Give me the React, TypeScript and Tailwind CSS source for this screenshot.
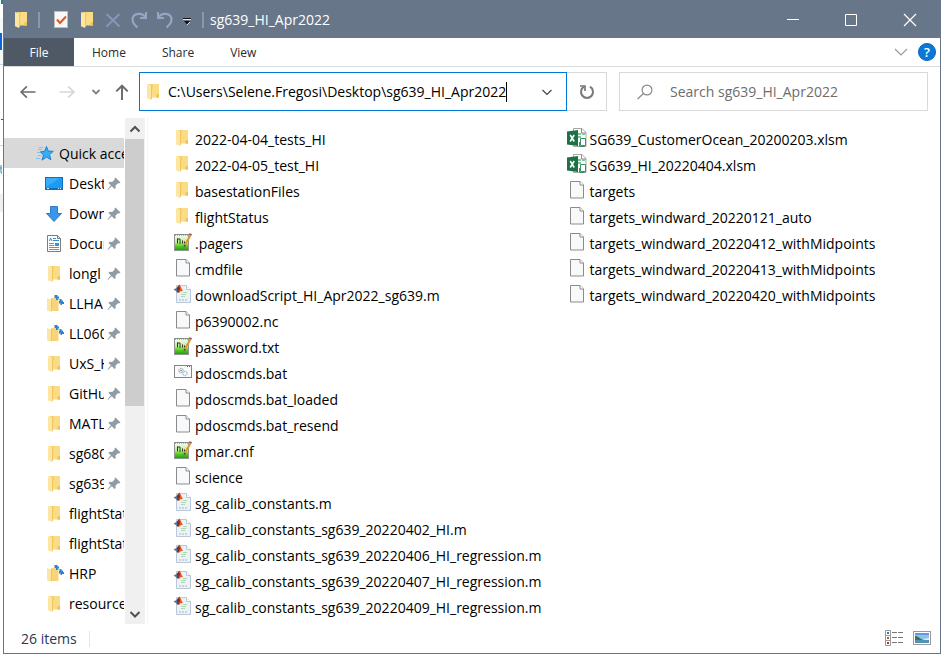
import type { ReactNode } from "react";

const FONT = "font-['Open_Sans','Noto_Sans',sans-serif]";

type IconProps = { children: ReactNode; size?: number };

function Icon({ children, size = 20 }: IconProps) {
  return (
    <svg width={size} height={size} viewBox={`0 0 ${size} ${size}`} className="shrink-0" aria-hidden="true">
      {children}
    </svg>
  );
}

function FolderIcon() {
  return (
    <Icon>
      <path d="M5 2h9.5v13H5z" fill="#f6cf6b" />
      <path d="M9 2h6v13.5H7z" fill="#fadb86" />
      <path d="M12.5 12.5l2.5-.8v4h-2.5z" fill="#efc25a" />
      <path d="M3 2l4 1.2V18l-4-1.8z" fill="#fde6a2" />
      <path d="M7 4.500V17.500l1-.8V4z" fill="#f0c562" />
    </Icon>
  );
}

function SyncFolderIcon() {
  return (
    <Icon>
      <path d="M2 4l4 1.2V18l-4-1.4z" fill="#fde6a2" />
      <path d="M6 4h7.5v13H6z" fill="#f8d37a" />
      <path d="M6 5.5V17.500l1-.8V5z" fill="#f0c562" />
      <path d="M9.500 1h3v1.500H14v2h-1v1.500h-2V4H9.500z" fill="#2c83cf" />
      <path d="M14.500 5h2v1.500H18v1.500h1v2h-2v1h-1.500V9.500h-1.500V7h.5z" fill="#2c83cf" />
      <path d="M12.500 4.500h2v1h-2z" fill="#8cbde6" />
    </Icon>
  );
}

function PageIcon() {
  return (
    <Icon>
      <path d="M3.500 1.500h9.500l3.500 3.500v13h-13z" fill="#f8f9fa" stroke="#8b8b8b" />
      <path d="M13 1.500v3.500h3.500" fill="#fff" stroke="#8b8b8b" />
    </Icon>
  );
}

function NotepadIcon() {
  return (
    <Icon>
      <defs>
        <linearGradient id="notepad-page" x1="0" y1="0" x2="0" y2="1">
          <stop offset="0.1" stopColor="#f3f8ef" />
          <stop offset="0.5" stopColor="#b8ea8c" />
          <stop offset="0.75" stopColor="#4fc81e" />
          <stop offset="1" stopColor="#1f9a14" />
        </linearGradient>
      </defs>
      <rect x="1.500" y="2.500" width="14" height="16" fill="url(#notepad-page)" stroke="#8f958f" />
      <path d="M2 3h13" stroke="#777" strokeDasharray="1 1" />
      <path d="M4.500 6.500v5M7 7v5M4.500 7H7M9.500 8.500v3M11.500 9.500v2" stroke="#2b3a24" fill="none" />
      <path d="M17.300 3.500L12 13" stroke="#e09a2c" strokeWidth="2" />
      <path d="M16.800 1l2.200 1.300-.9 1.700-2.200-1.300z" fill="#a4574a" />
      <path d="M11 12.500l2 1.200-2.300 1.800z" fill="#5b4a2a" />
    </Icon>
  );
}

function MatlabIcon() {
  return (
    <Icon>
      <path d="M3.500 1.500h10l4 4v13h-14z" fill="#edf2f9" stroke="#b8c7da" />
      <path d="M13.500 1.500v4h4" fill="#fff" stroke="#b8c7da" />
      <path d="M10 8.500h4M8 10.500h5M8 12.500h4" stroke="#a9d9ae" />
      <path d="M6 15.500h9M6 16.500h8" stroke="#ced3da" strokeDasharray="2 1" />
      <path d="M.5 5.500l3-1.500L6 6 3.500 7.500z" fill="#3a83bd" />
      <path d="M3.500 4L6.500.5 7.500 6 5 9 3.500 7.500 4.500 6z" fill="#8c2b18" />
      <path d="M6.500.5c1.200 1.500 2 4 3.500 6.500-1.200-.3-2.200 0-3.500 1.500L5 9l2-4z" fill="#dd5f2a" />
    </Icon>
  );
}

function BatchIcon() {
  return (
    <Icon>
      <rect x="1.500" y="3.500" width="17" height="12" fill="#fbfbfb" stroke="#858585" />
      <path d="M14 4.500h1M16 4.500h1" stroke="#555" />
      <circle cx="8" cy="8.500" r="2.200" fill="#f4f4f4" stroke="#8a9197" strokeDasharray="1.500 .6" />
      <circle cx="8" cy="8.500" r=".7" fill="#666" />
      <circle cx="12" cy="11.500" r="2.200" fill="#eaf5fc" stroke="#76a9c9" strokeDasharray="1.500 .6" />
    </Icon>
  );
}

function ExcelIcon() {
  return (
    <Icon>
      <path d="M6.500.5h8.500l4 4v14h-12.500z" fill="#fff" stroke="#a6a9a6" />
      <path d="M14.500.5v4.500h4.500" fill="none" stroke="#8c8c8c" />
      <path d="M11 6h3M15 6h3M11 9h3" stroke="#86c3a0" strokeWidth="2" />
      <path d="M13.500 10.500h5v7h-5z" fill="#fff" stroke="#3a9262" />
      <path d="M12.500 14v4.500h5" fill="none" stroke="#3a9262" />
      <path d="M0 3.500l11-1.500v16L0 16.500z" fill="#1e7145" />
      <path d="M3.200 7l4 6.500M7.200 7l-4 6.500" stroke="#fff" strokeWidth="1.600" />
    </Icon>
  );
}

function StarIcon() {
  return (
    <Icon>
      <path d="M10.500 2.500l1.800 4.600 5 .2-3.800 3.300 1.400 5.100-4.300-2.600-4.600 3 1.500-5.200-3.200-3 4.300-.6z" fill="#3aabf5" stroke="#1f82cb" />
      <path d="M2 5.500h4M3 3.500h4M1 8.500h3M2 11.500h3M0 14.500h4" stroke="#7fc4f0" />
    </Icon>
  );
}

function DesktopIcon() {
  return (
    <Icon>
      <rect x=".5" y="3.500" width="17" height="12" fill="#1a9bf5" stroke="#0f6fbd" />
      <path d="M1 13V4h14z" fill="#38aefa" />
      <path d="M1 14.500h16" stroke="#0f6fbd" />
      <path d="M2 14.500h2M13 14.500h1M15 14.500h1" stroke="#d8efff" />
    </Icon>
  );
}

function DownloadIcon() {
  return (
    <Icon>
      <path d="M5.500 2.500h7v7h4L9 17.500 1.500 9.500h4z" fill="#3a96e8" stroke="#2c7cc8" />
    </Icon>
  );
}

function DocumentsIcon() {
  return (
    <Icon>
      <path d="M2.500 1.500h10l3 3v13h-13z" fill="#fff" stroke="#7d7d7d" />
      <path d="M12.500 1.500v3h3" fill="none" stroke="#7d7d7d" />
      <path d="M4.500 7l1-3L7 7M8 4.500h3M8 6.500h6" stroke="#2d8fd5" fill="none" />
      <path d="M4 9.500h5M4 11.500h5M4 13.500h10M4 15.500h10" stroke="#8b8b8b" />
      <rect x="10" y="9" width="4" height="3" fill="#3a93cf" />
    </Icon>
  );
}

function PinIcon() {
  return (
    <Icon size={14}>
      <path d="M8.500.5l5 5-1.500 1-1-.3-2.500 2.300.2 2.500-1.200 1-2.700-2.700L.8 13l-.3-.5 3.400-4.200L1.500 6l1-1.200 2.700.2L7.700 2.500 7.500 1.500z" fill="#8f9ba5" />
    </Icon>
  );
}

function Stroke({ size = 14, d = "M2.500 5l4.500 4.500L11.500 5", width = 1.2 }: { size?: number; d?: string; width?: number }) {
  return (
    <svg width={size} height={size} viewBox="0 0 14 14" fill="none" stroke="currentColor" strokeWidth={width} aria-hidden="true">
      <path d={d} />
    </svg>
  );
}

type Place = { name: string; icon: () => ReactNode; pinned?: boolean };

const places: Place[] = [
  { name: "Desktop", icon: DesktopIcon, pinned: true },
  { name: "Downloads", icon: DownloadIcon, pinned: true },
  { name: "Documents", icon: DocumentsIcon, pinned: true },
  { name: "longl", icon: FolderIcon, pinned: true },
  { name: "LLHA", icon: SyncFolderIcon, pinned: true },
  { name: "LL060", icon: SyncFolderIcon, pinned: true },
  { name: "UxS_H", icon: FolderIcon, pinned: true },
  { name: "GitHub", icon: FolderIcon, pinned: true },
  { name: "MATLAB", icon: FolderIcon, pinned: true },
  { name: "sg680", icon: FolderIcon, pinned: true },
  { name: "sg639", icon: FolderIcon, pinned: true },
  { name: "flightStatus", icon: FolderIcon },
  { name: "flightStatus", icon: FolderIcon },
  { name: "HRP", icon: SyncFolderIcon },
  { name: "resources", icon: FolderIcon },
];

const files: [string, () => ReactNode][] = [
  ["2022-04-04_tests_HI", FolderIcon],
  ["2022-04-05_test_HI", FolderIcon],
  ["basestationFiles", FolderIcon],
  ["flightStatus", FolderIcon],
  [".pagers", NotepadIcon],
  ["cmdfile", PageIcon],
  ["downloadScript_HI_Apr2022_sg639.m", MatlabIcon],
  ["p6390002.nc", PageIcon],
  ["password.txt", NotepadIcon],
  ["pdoscmds.bat", BatchIcon],
  ["pdoscmds.bat_loaded", PageIcon],
  ["pdoscmds.bat_resend", PageIcon],
  ["pmar.cnf", NotepadIcon],
  ["science", PageIcon],
  ["sg_calib_constants.m", MatlabIcon],
  ["sg_calib_constants_sg639_20220402_HI.m", MatlabIcon],
  ["sg_calib_constants_sg639_20220406_HI_regression.m", MatlabIcon],
  ["sg_calib_constants_sg639_20220407_HI_regression.m", MatlabIcon],
  ["sg_calib_constants_sg639_20220409_HI_regression.m", MatlabIcon],
  ["SG639_CustomerOcean_20200203.xlsm", ExcelIcon],
  ["SG639_HI_20220404.xlsm", ExcelIcon],
  ["targets", PageIcon],
  ["targets_windward_20220121_auto", PageIcon],
  ["targets_windward_20220412_withMidpoints", PageIcon],
  ["targets_windward_20220413_withMidpoints", PageIcon],
  ["targets_windward_20220420_withMidpoints", PageIcon],
];

function TitleBar() {
  return (
    <header className="flex h-[38px] shrink-0 items-center bg-[#687689] pt-px text-white">
      <div className="flex items-center pl-2">
        <FolderIcon />
        <span className="mr-3 ml-1.5 h-4 w-[2px] bg-[#8d97a5]" />
        <button aria-label="Properties" className="mr-1.5 flex">
          <Icon>
            <rect x="2.500" y="1.500" width="13" height="16" fill="#f8f8f8" stroke="#bdbdbd" />
            <path d="M5 9.500l3 3.500L14 6.500" fill="none" stroke="#e2571a" strokeWidth="2" />
          </Icon>
        </button>
        <button aria-label="New folder" className="mr-1.5 flex">
          <FolderIcon />
        </button>
        <button aria-label="Delete" className="mr-1.5 flex">
          <Icon>
            <path d="M2.500 4l13 12.500M15.500 4l-13 12.500" stroke="#8497b8" strokeWidth="2" />
          </Icon>
        </button>
        <button aria-label="Redo" className="mr-1.5 flex">
          <Icon>
            <path d="M16 2v6h-6" fill="none" stroke="#94a6c3" strokeWidth="2" />
            <path d="M16 8C13 2 3 2.500 2.500 9.500c0 3 1.500 5 5 8" fill="none" stroke="#94a6c3" strokeWidth="2.200" />
          </Icon>
        </button>
        <button aria-label="Undo" className="mr-1 flex">
          <Icon>
            <path d="M2 2v6h6" fill="none" stroke="#94a6c3" strokeWidth="2" />
            <path d="M2 8C5 2 15.500 2.500 15.500 9.500c0 3-1.500 5-5 8" fill="none" stroke="#94a6c3" strokeWidth="2.200" />
          </Icon>
        </button>
        <button aria-label="Customize Quick Access Toolbar" className="flex">
          <Icon size={14}>
            <path d="M3 5.500h8" stroke="#111" />
            <path d="M3 6.500h8" stroke="#e6e6e6" />
            <path d="M4 8h6l-3 3.500z" fill="#111" />
            <path d="M10 9l-3 3" stroke="#e6e6e6" />
          </Icon>
        </button>
        <span className="mr-1.5 ml-2 h-4 w-[2px] bg-[#8d97a5]" />
      </div>
      <h1 className="flex-1 text-sm">sg639_HI_Apr2022</h1>
      <div className="flex text-white">
        <button aria-label="Minimize" className="flex w-[58px] justify-center">
          <Stroke d="M1 6.500h12" width={1} />
        </button>
        <button aria-label="Maximize" className="flex w-[58px] justify-center">
          <Stroke d="M1.500 1.500h11v11h-11z" width={1} />
        </button>
        <button aria-label="Close" className="flex w-[60px] justify-center">
          <Stroke d="M1 1l12 12M13 1L1 13" />
        </button>
      </div>
    </header>
  );
}

function Ribbon() {
  return (
    <nav aria-label="Ribbon" className="flex h-[29px] shrink-0 border-b border-[#dadbdc] text-xs text-[#2b2b2b]">
      <button className="w-[70px] bg-[#4f5966] pt-px text-white">File</button>
      <button className="px-[18px] pt-px">Home</button>
      <button className="px-[18px] pt-px">Share</button>
      <button className="px-[18px] pt-px">View</button>
      <button aria-label="Expand the Ribbon" className="ml-auto px-2.5 text-[#9a9a9a]">
        <Stroke d="M1 4l6 6 6-6" />
      </button>
      <button aria-label="Help" className="mr-1">
        <Icon size={18}>
          <circle cx="9" cy="9" r="8.500" fill="#0a78d6" stroke="#0c63b3" />
          <text x="9" y="14" textAnchor="middle" fill="#fff" fontSize="13" fontWeight="600">?</text>
        </Icon>
      </button>
    </nav>
  );
}

function AddressRow() {
  return (
    <div className="flex h-[51px] shrink-0 items-center pr-3 pb-[2px] pl-1">
      <button aria-label="Back" className="flex w-[39px] justify-center text-[#6b6b6b]">
        <Stroke size={16} d="M13.500 7H1M6 2L1 7l5 5" width={1.5} />
      </button>
      <button aria-label="Forward" className="flex w-[39px] justify-center text-[#d6d6d6]">
        <Stroke size={16} d="M.5 7H13M8 2l5 5-5 5" width={1.5} />
      </button>
      <button aria-label="Recent locations" className="flex w-5 justify-center text-[#808080]">
        <Stroke d="M3.500 5L7 8.500 10.500 5" width={1.8} />
      </button>
      <button aria-label="Up" className="mr-[2px] flex w-[31px] justify-center text-[#6b6b6b]">
        <Stroke size={16} d="M7 14V1.500M2 6.500l5-5 5 5" width={1.7} />
      </button>
      <div className="flex h-[39px] flex-[422] items-center border border-[#0078d7] pl-1">
        <FolderIcon />
        <input
          aria-label="Address"
          readOnly
          value="C:\Users\Selene.Fregosi\Desktop\sg639_HI_Apr2022"
          className="ml-1 field-sizing-content min-w-0 text-sm text-black outline-none"
        />
        <span className="h-5 w-px shrink-0 bg-black" />
        <button aria-label="Previous locations" className="mr-3 ml-auto flex text-[#444]">
          <Stroke />
        </button>
      </div>
      <button aria-label="Refresh" className="mr-3 flex h-[39px] w-10 shrink-0 items-center justify-center border border-l-0 border-[#d9d9d9] text-[#7a7a7a]">
        <svg width="16" height="16" viewBox="0 0 16 16" fill="none" stroke="currentColor" strokeWidth="2" aria-hidden="true">
          <path d="M11 2.700a6 6 0 1 1-6 0" />
          <path d="M1 2h5v5" strokeWidth="1.700" />
        </svg>
      </button>
      <label className="flex h-[39px] flex-[291] items-center border border-[#d9d9d9] pl-4">
        <svg width="18" height="18" viewBox="0 0 18 18" fill="none" stroke="#8a8a8a" strokeWidth="1.200" className="shrink-0" aria-hidden="true">
          <circle cx="11" cy="7" r="4.900" />
          <path d="M7.500 10.500L1.500 16" />
        </svg>
        <input
          type="search"
          aria-label="Search"
          placeholder="Search sg639_HI_Apr2022"
          className="ml-4 w-full min-w-0 text-sm outline-none placeholder:text-[#6d6d6d]"
        />
      </label>
    </div>
  );
}

function Sidebar() {
  return (
    <div className="flex w-36 shrink-0 border-r border-[#f3f3f3]">
      <nav aria-label="Navigation pane" className="mt-5 mr-px min-w-0 flex-1 text-sm text-black">
        <a href="#quick" className="flex h-[30px] items-center bg-[#d9d9d9] pt-px pl-8">
          <StarIcon />
          <span className="ml-[3px] overflow-hidden whitespace-nowrap">Quick access</span>
        </a>
        {places.map((place, i) => (
          <a key={i} href="#place" className="flex h-[30px] items-center pt-px pl-[41px]">
            <place.icon />
            <span className="ml-1 flex-1 overflow-hidden whitespace-nowrap">{place.name}</span>
            {place.pinned && (
              <span className="mr-[3px] ml-[3px]">
                <PinIcon />
              </span>
            )}
          </a>
        ))}
      </nav>
      <div className="mr-[2px] flex w-5 flex-col bg-[#f0f0f0] text-[#505050]">
        <button aria-label="Scroll up" className="flex h-[21px] items-center justify-center">
          <Stroke d="M2.500 9.500L7 5l4.500 4.500" width={2} />
        </button>
        <div className="flex-1">
          <div className="mr-px h-[57.500%] bg-[#cdcdcd]" />
        </div>
        <button aria-label="Scroll down" className="flex h-[21px] items-center justify-center">
          <Stroke width={2} />
        </button>
      </div>
    </div>
  );
}

function FileList() {
  return (
    <main className="min-w-0 flex-1 overflow-hidden pt-[9px] pl-[25px]">
      <ul className="grid auto-cols-max grid-flow-col grid-rows-[repeat(19,26px)] gap-x-[26px] text-sm text-black">
        {files.map(([name, FileIcon]) => (
          <li key={name}>
            <a href="#file" className="flex h-[26px] items-start gap-[2px] pt-px">
              <FileIcon />
              <span className="leading-6 whitespace-nowrap">{name}</span>
            </a>
          </li>
        ))}
      </ul>
    </main>
  );
}

function StatusBar() {
  return (
    <footer className="flex h-[29px] shrink-0 items-center pr-2 pl-[17px] text-sm text-[#1e395b]">
      <span>26 items</span>
      <span className="ml-3 h-4 w-px bg-[#e6e6e6]" />
      <button aria-label="Details view" className="mr-2 ml-auto flex">
        <Icon>
          <path d="M1.500 1.500h5v15h-5zM1.500 6.500h5M1.500 11.500h5" fill="#fff" stroke="#9a9a9a" />
          <path d="M3 4h2" stroke="#3177c8" strokeWidth="2" />
          <path d="M3 9h2" stroke="#a1673c" strokeWidth="2" />
          <path d="M3 14h2" stroke="#d81e1e" strokeWidth="2" />
          <path d="M8 3.500h5M14 3.500h5M8 8.500h5M14 8.500h5M8 13.500h5M14 13.500h5" stroke="#777" />
        </Icon>
      </button>
      <button aria-label="Large icons view" className="flex">
        <Icon>
          <rect x="1.500" y="2.500" width="17" height="13" fill="#fff" stroke="#9a9a9a" />
          <rect x="3" y="4" width="14" height="10" fill="#8fc1ec" />
          <path d="M3 4h14v2H3z" fill="#5c9be6" />
          <path d="M3 7c3 0 5 2.500 9 4.500H3z" fill="#3f6f57" />
          <path d="M3 11h14v3H3z" fill="#4f93b8" />
          <path d="M12 10l5-1v2h-5z" fill="#dceefa" />
        </Icon>
      </button>
    </footer>
  );
}

function BackdropEdge() {
  return (
    <svg width="3" height="655" className="shrink-0" aria-hidden="true">
      <path d="M0 0h3v18H0z" fill="#fff" />
      <path d="M1 0h2v4H1z" fill="#2a7f8c" />
      <path d="M0 18h3v46H0z" fill="#f7f8f9" />
      <path d="M0 33h2v17H0z" fill="#0a63e0" />
      <path d="M0 64h3v1H0zM0 145h3v1H0z" fill="#d4d4d4" />
      <path d="M1 119h2v1H1z" fill="#5b4a3c" />
      <path d="M0 168h2M1 165v8h1" stroke="#3a8fb0" fill="none" />
      <path d="M0 194h3v18H0z" fill="#f0f0f0" />
    </svg>
  );
}

export default function App() {
  return (
    <div className={`flex h-screen min-h-[655px] overflow-hidden bg-white pr-px pb-px ${FONT}`}>
      <BackdropEdge />
      <div className="flex min-w-0 flex-1 flex-col border border-t-0 border-[#687689] bg-white">
        <TitleBar />
        <Ribbon />
        <AddressRow />
        <div className="flex min-h-0 flex-1">
          <Sidebar />
          <FileList />
        </div>
        <StatusBar />
      </div>
    </div>
  );
}
